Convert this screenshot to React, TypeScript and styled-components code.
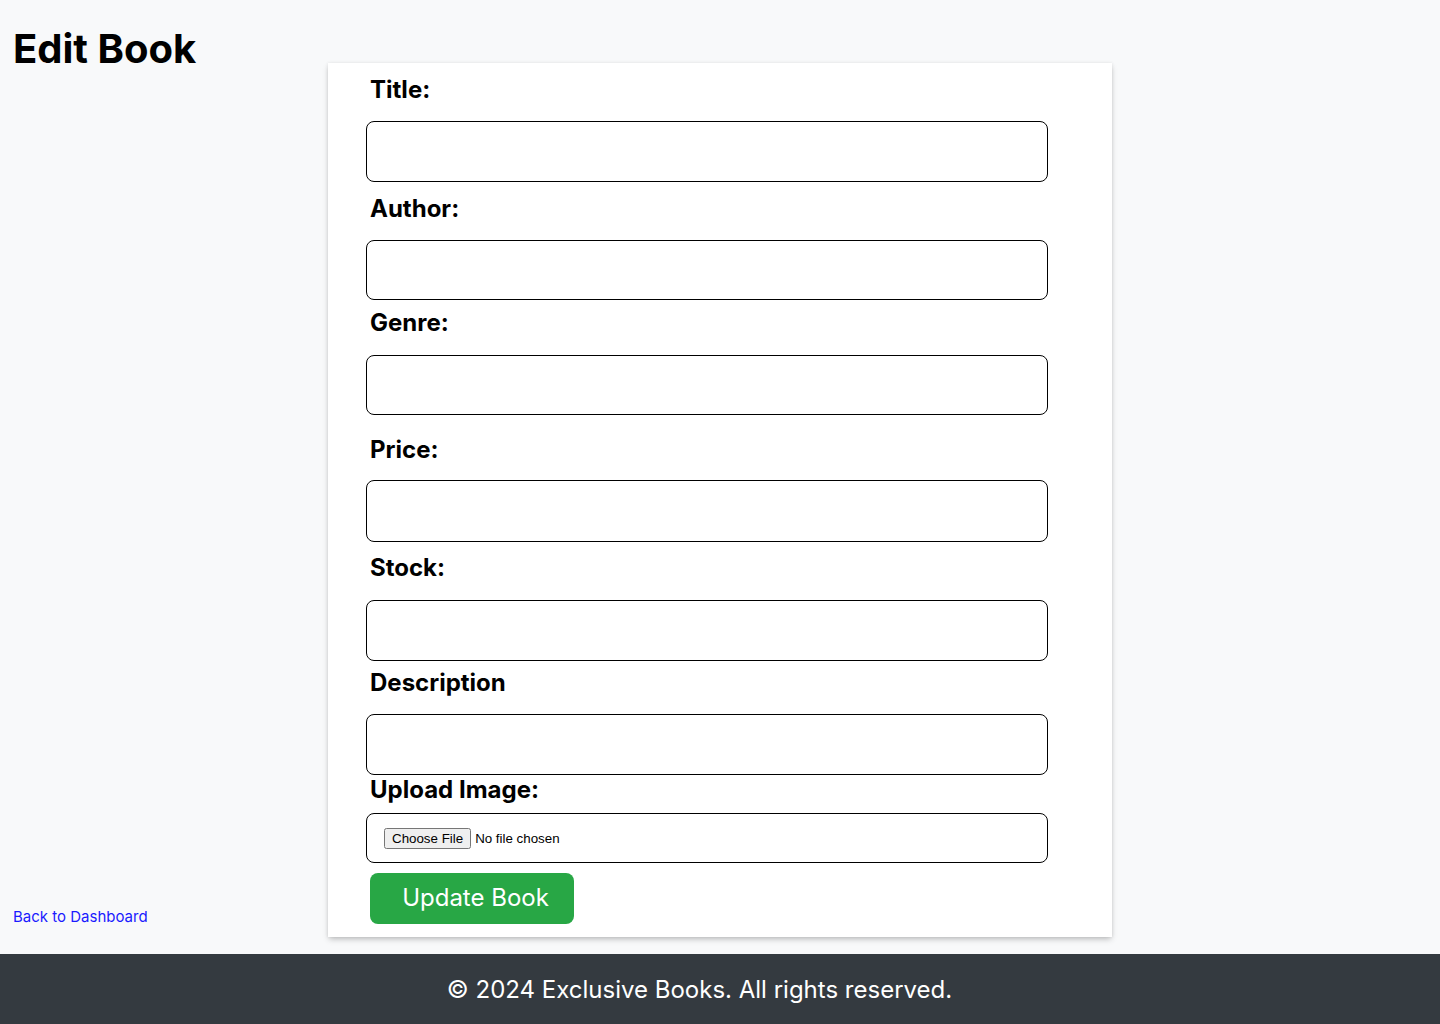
import React from 'react'
import styled, { createGlobalStyle } from 'styled-components'

const GlobalStyle = createGlobalStyle`
  html, body {
    margin: 0;
    padding: 0;
    background: #f8f9fa;
    font-family: Inter, 'Noto Sans', sans-serif;
  }
`

const Page = styled.div`
  display: flex;
  flex-direction: column;
  min-height: 1024px;
`

const Main = styled.main`
  flex: 1;
  display: flex;
  align-items: stretch;
  padding: 0 0 17px 13px;
`

const Side = styled.div`
  width: 315px;
  display: flex;
  flex-direction: column;
  justify-content: space-between;
`

const Heading = styled.h1`
  margin: 25px 0 0;
  font-size: 40px;
  font-weight: 700;
  line-height: 48px;
  color: #000;
`

const BackLink = styled.a`
  margin-bottom: 11px;
  font-size: 15px;
  line-height: 18px;
  color: #1a1aff;
  text-decoration: none;
  cursor: pointer;
`

const Card = styled.form`
  margin-top: 63px;
  width: 784px;
  box-sizing: border-box;
  padding: 0 64px 13px 38px;
  background: #fff;
  box-shadow: 0 3px 6px -1px rgba(0, 0, 0, 0.25), 0 0 3px rgba(0, 0, 0, 0.08);
`

const Field = styled.div<{ $top: number }>`
  display: flex;
  flex-direction: column;
  margin-top: ${({ $top }) => $top}px;
`

const Label = styled.label<{ $gap: number }>`
  margin: 0 0 ${({ $gap }) => $gap}px 4px;
  font-size: 24px;
  line-height: 29px;
  font-weight: 700;
  color: #000;
`

const TextInput = styled.input<{ $h: number }>`
  box-sizing: border-box;
  width: 682px;
  height: ${({ $h }) => $h}px;
  border: 1px solid #000;
  border-radius: 8px;
  padding: 0 12px;
  font-family: inherit;
  font-size: 16px;
  background: #fff;
  outline: none;
`

const FileInput = styled.input`
  box-sizing: border-box;
  width: 682px;
  height: 50px;
  border: 1px solid #000;
  border-radius: 8px;
  padding: 14px 17px;
  background: #fff;
  font-family: 'Liberation Sans', Arial, sans-serif;
  font-size: 13.33px;
  color: #000;

  &::file-selector-button {
    font-family: 'Liberation Sans', Arial, sans-serif;
    font-size: 13.33px;
  }
`

const SubmitButton = styled.button`
  margin: 10px 0 0 4px;
  width: 204px;
  height: 51px;
  padding: 0 0 2px 7px;
  border: none;
  border-radius: 8px;
  background: #28a745;
  color: #fff;
  font-family: inherit;
  font-size: 24px;
  cursor: pointer;
`

const Footer = styled.footer`
  height: 70px;
  display: flex;
  align-items: center;
  justify-content: center;
  padding-right: 41px;
  background: #343a40;
  color: #fff;
  font-size: 24px;
`

const fields = [
  { label: 'Title:', top: 12, gap: 17, h: 61 },
  { label: 'Author:', top: 12, gap: 17, h: 60 },
  { label: 'Genre:', top: 8, gap: 18, h: 60 },
  { label: 'Price:', top: 20, gap: 16, h: 62 },
  { label: 'Stock:', top: 11, gap: 18, h: 61 },
  { label: 'Description', top: 7, gap: 17, h: 61 }
]

export default function App() {
  return (
    <Page>
      <GlobalStyle />
      <Main>
        <Side>
          <Heading>Edit Book</Heading>
          <BackLink>Back to Dashboard</BackLink>
        </Side>
        <Card onSubmit={(e) => e.preventDefault()}>
          {fields.map((f) => (
            <Field key={f.label} $top={f.top}>
              <Label $gap={f.gap}>{f.label}</Label>
              <TextInput $h={f.h} />
            </Field>
          ))}
          <Field $top={0}>
            <Label $gap={9}>Upload Image:</Label>
            <FileInput type="file" />
          </Field>
          <SubmitButton type="submit">Update Book</SubmitButton>
        </Card>
      </Main>
      <Footer>© 2024 Exclusive Books. All rights reserved.</Footer>
    </Page>
  )
}
